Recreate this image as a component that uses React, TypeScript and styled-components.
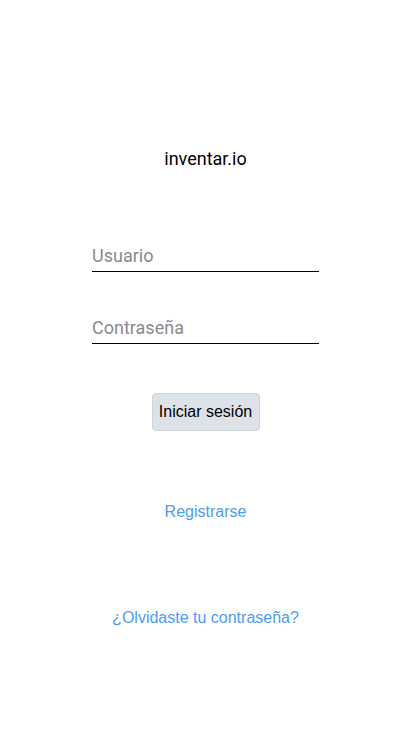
import { createGlobalStyle } from "styled-components";
import styled from "styled-components";

const GlobalStyle = createGlobalStyle`
  html, body {
    margin: 0;
    padding: 0;
    background: #ffffff;
  }
  * {
    box-sizing: border-box;
  }
`;

const App = () => {
  return (
    <>
      <GlobalStyle />
      <Page>
        <Title>inventar.io</Title>
        <Form>
          <Field placeholder="Usuario" type="text" />
          <Field placeholder="Contraseña" type="password" />
        </Form>
        <LoginButton type="button">Iniciar sesión</LoginButton>
        <LinkText $top={71}>Registrarse</LinkText>
        <LinkText $top={86}>¿Olvidaste tu contraseña?</LinkText>
      </Page>
    </>
  );
};

export default App;

const Page = styled.div`
  width: 411px;
  min-height: 731px;
  display: flex;
  flex-direction: column;
  align-items: center;
  padding-top: 147px;
`;

const Title = styled.h1`
  margin: 0;
  font-family: Roboto, "Noto Sans", sans-serif;
  font-size: 18px;
  font-weight: 400;
  line-height: 24px;
  color: #000000;
`;

const Form = styled.div`
  display: flex;
  flex-direction: column;
  gap: 40px;
  margin-top: 69px;
`;

const Field = styled.input`
  width: 227px;
  height: 32px;
  padding: 0;
  border: none;
  border-bottom: 1px solid #000000;
  outline: none;
  background: transparent;
  font-family: Roboto, "Noto Sans", sans-serif;
  font-size: 18px;
  color: #000000;

  &::placeholder {
    color: #8a8a8a;
  }
`;

const LoginButton = styled.button`
  margin-top: 49px;
  width: 108px;
  height: 38px;
  padding: 0;
  border: 1px solid #cfd3da;
  border-radius: 4px;
  background: #dde1e8;
  font-family: "Liberation Sans", Arial, sans-serif;
  font-size: 16px;
  color: #000000;
`;

const LinkText = styled.a<{ $top: number }>`
  margin-top: ${({ $top }) => $top}px;
  font-family: "Liberation Sans", Arial, sans-serif;
  font-size: 16px;
  line-height: 20px;
  color: #4d9cf0;
  cursor: pointer;
`;
